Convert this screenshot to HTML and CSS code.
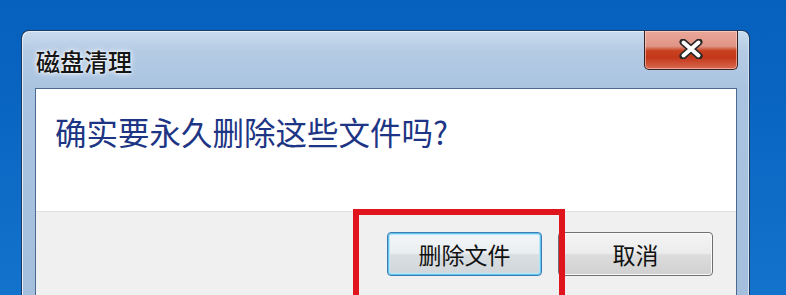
FILE: index.html
```html
<!DOCTYPE html>
<html lang="zh-CN">
<head>
<meta charset="utf-8">
<title>磁盘清理</title>
<link rel="stylesheet" href="styles.css">
</head>
<body>
<div class="window">
  <div class="titlebar">
    <div class="title">磁盘清理</div>
    <div class="close">
      <svg width="26" height="20" viewBox="0 0 26 20">
        <path d="M5 3 L21 17 M21 3 L5 17" stroke="#262626" stroke-width="7" stroke-linecap="round"/>
        <path d="M5.5 3.5 L20.5 16.5 M20.5 3.5 L5.5 16.5" stroke="#ffffff" stroke-width="4" stroke-linecap="round"/>
      </svg>
    </div>
  </div>
  <div class="client">
    <div class="content">
      <div class="instruction">确实要永久删除这些文件吗?</div>
    </div>
    <div class="footer">
      <button class="btn btn-default">删除文件</button>
      <button class="btn">取消</button>
    </div>
  </div>
</div>
<div class="highlight"></div>
</body>
</html>
```

FILE: styles.css
```css
html, body {
  margin: 0;
  padding: 0;
}
body {
  width: 786px;
  height: 295px;
  overflow: hidden;
  position: relative;
  background: linear-gradient(180deg, #0660bd 0%, #0a66c3 40%, #1373cc 100%);
  font-family: "Noto Sans CJK SC", "Noto Sans", sans-serif;
}
.window {
  margin: 30px 0 0 21px;
  width: 729px;
  height: 265px;
  box-sizing: border-box;
  border: 1px solid #1f3a60;
  border-bottom: none;
  border-radius: 8px 8px 0 0;
  background: linear-gradient(180deg, #c9dbee 0px, #b5cbe4 20px, #a9c3e0 60px, #a4bfdd 100%);
  box-shadow: inset 1px 1px 0 #e4eef8, inset -1px 0 0 #d4e2f1;
  padding: 0 12px 0 13px;
  display: flex;
  flex-direction: column;
}
.titlebar {
  height: 57px;
  flex: none;
  display: flex;
  justify-content: space-between;
  align-items: flex-start;
}
.title {
  margin: 14px 0 0 1px;
  font-size: 24px;
  line-height: 32px;
  font-weight: 500;
  color: #151515;
  text-shadow: 0 0 6px #ffffff, 0 0 3px #ffffff;
}
.close {
  margin: 0 -1px 0 0;
  width: 94px;
  height: 39px;
  box-sizing: border-box;
  border: 1px solid #3a2222;
  border-top: none;
  border-radius: 0 0 5px 5px;
  background: linear-gradient(180deg, #eaa79a 0%, #e09585 40%, #c8411f 52%, #c3371b 70%, #d96a50 100%);
  box-shadow: inset 0 0 0 1px rgba(255, 220, 210, 0.55);
  display: flex;
  justify-content: center;
  align-items: center;
  padding-bottom: 2px;
}
.client {
  flex: 1;
  border: 1px solid #4a6a92;
  border-bottom: none;
  display: flex;
  flex-direction: column;
  background: #f0f0f0;
}
.content {
  background: #ffffff;
  height: 123px;
  flex: none;
  padding: 22px 0 0 19px;
  box-sizing: border-box;
  border-bottom: 1px solid #dfdfdf;
}
.instruction {
  font-size: 31.5px;
  line-height: 40px;
  color: #1d3584;
}
.footer {
  display: flex;
  justify-content: flex-end;
  gap: 16px;
  padding: 20px 23px 0 0;
}
.btn {
  width: 155px;
  height: 44px;
  box-sizing: border-box;
  border: 1px solid #707070;
  border-radius: 4px;
  background: linear-gradient(180deg, #f4f4f4 0%, #ececec 48%, #dddddd 52%, #d0d0d0 100%);
  box-shadow: inset 0 0 0 1px #fbfbfb;
  font-family: "Noto Sans CJK SC", "Noto Sans", sans-serif;
  font-size: 23px;
  line-height: 30px;
  color: #111111;
  padding: 0;
}
.btn-default {
  border: 1px solid #3d7cb0;
  box-shadow: inset 0 0 0 1px #62c4ee, inset 0 0 0 2px #b6e6fa;
  background: linear-gradient(180deg, #f3f6f8 0%, #eaeef0 48%, #d9dee1 52%, #cfd6da 100%);
}
.highlight {
  position: absolute;
  left: 353px;
  top: 209px;
  width: 212px;
  height: 86px;
  box-sizing: border-box;
  border: 6px solid #e0141c;
  border-bottom: none;
}
```
